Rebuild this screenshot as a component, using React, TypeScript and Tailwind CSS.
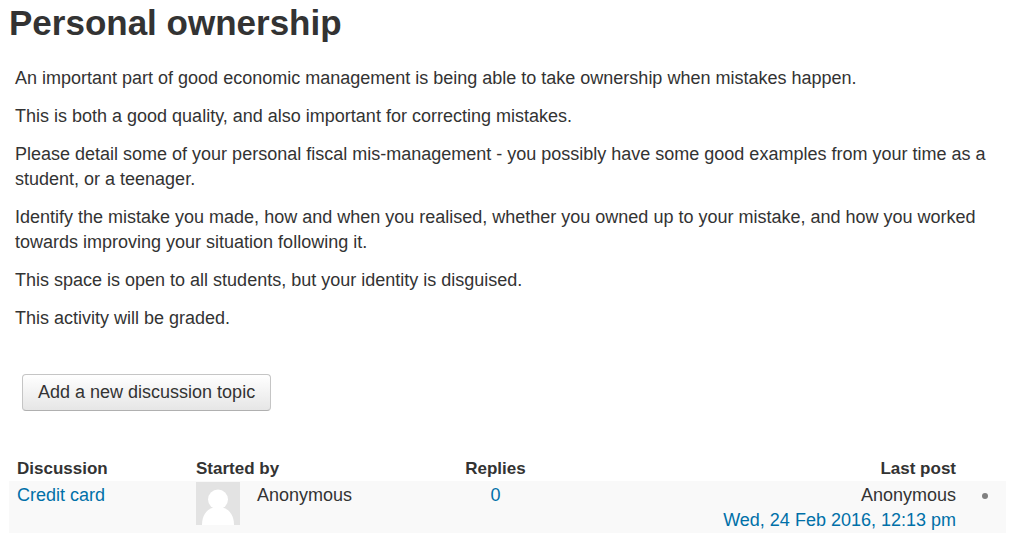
import React from "react";

const paragraphs = [
    "An important part of good economic management is being able to take ownership when mistakes happen.",
    "This is both a good quality, and also important for correcting mistakes.",
    "Please detail some of your personal fiscal mis-management - you possibly have some good examples from your time as a student, or a teenager.",
    "Identify the mistake you made, how and when you realised, whether you owned up to your mistake, and how you worked towards improving your situation following it.",
    "This space is open to all students, but your identity is disguised.",
    "This activity will be graded.",
];

const discussions = [
    { id: 1, topic: "Credit card", author: "Anonymous", replies: 0, lastAuthor: "Anonymous", lastDate: "Wed, 24 Feb 2016, 12:13 pm" },
];

function Avatar() {
    return (
        <svg viewBox="0 0 44 43" className="w-11 h-[43px] shrink-0" aria-hidden="true">
            <rect width="44" height="43" fill="#e3e3e3" />
            <circle cx="22" cy="17.5" r="10" fill="#fff" />
            <path d="M6 43C6 34 10 28 16 26H28C34 28 38 34 38 43Z" fill="#fff" />
        </svg>
    );
}

export default function App() {
    return (
        <main className="bg-white pl-[9px] pr-[14px] pt-1 pb-4 font-['Liberation_Sans',Arial,sans-serif] text-lg leading-[25px] text-[#333]">
            <h1 className="text-[35px] leading-[38px] font-bold">Personal ownership</h1>

            <div className="mt-6 px-1.5 flex flex-col gap-[13px]">
                {paragraphs.map((text) => (
                    <p key={text}>{text}</p>
                ))}
            </div>

            <button className="mt-[43px] ml-[13px] h-[37px] px-[15px] rounded border border-[#c5c5c5] border-b-[#b0b0b0] bg-linear-to-b from-white to-[#e6e6e6]">
                Add a new discussion topic
            </button>

            <table className="mt-[45px] w-full table-fixed border-collapse">
                <thead>
                    <tr className="text-left text-[17px]">
                        <th className="w-[179px] px-2">Discussion</th>
                        <th className="w-[231px] px-2">Started by</th>
                        <th className="w-[153px] text-center">Replies</th>
                        <th className="px-2 text-right">Last post</th>
                        <th className="w-[42px]"></th>
                    </tr>
                </thead>
                <tbody>
                    {discussions.map((d) => (
                        <tr key={d.id} className="bg-[#f9f9f9] align-top">
                            <td className="px-2 pt-0.5">
                                <a href="#" className="text-[#0070a8]">{d.topic}</a>
                            </td>
                            <td className="px-2 pt-px">
                                <div className="flex gap-[17px]">
                                    <Avatar />
                                    <span className="pt-px">{d.author}</span>
                                </div>
                            </td>
                            <td className="pt-0.5 text-center">
                                <a href="#" className="text-[#0070a8]">{d.replies}</a>
                            </td>
                            <td className="px-2 pt-0.5 text-right">
                                {d.lastAuthor}
                                <br />
                                <a href="#" className="text-[#0070a8]">{d.lastDate}</a>
                            </td>
                            <td className="pt-3">
                                <div className="mx-auto size-1.5 rounded-full bg-[#808080]" />
                            </td>
                        </tr>
                    ))}
                </tbody>
            </table>
        </main>
    );
}
